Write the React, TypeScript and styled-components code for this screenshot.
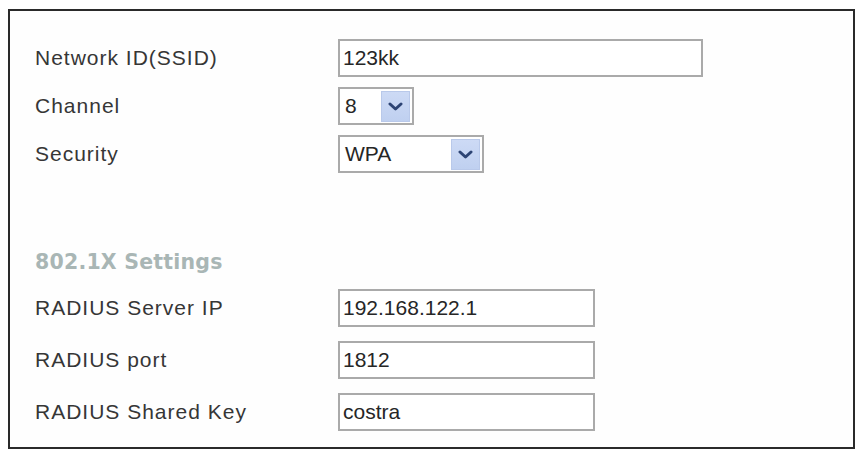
import React from "react";
import styled, { createGlobalStyle } from "styled-components";

const GlobalStyle = createGlobalStyle`
  body {
    margin: 9px 4px 0 8px;
    background: #ffffff;
    font-family: "Liberation Sans", Arial, sans-serif;
  }
`;

const Panel = styled.div`
  box-sizing: border-box;
  width: 847px;
  height: 440px;
  border: 2px solid #2a2a2a;
  padding: 28px 0 0 25px;
  background: #fefefe;
`;

const Section = styled.div<{ $gap: number }>`
  display: flex;
  flex-direction: column;
  gap: ${(p) => p.$gap}px;
`;

const Row = styled.div`
  display: grid;
  grid-template-columns: 303px auto;
  align-items: center;
  height: 38px;
`;

const Label = styled.span`
  font-size: 21px;
  letter-spacing: 1px;
  color: #363636;
`;

const Heading = styled.h3`
  margin: 77px 0 15px;
  height: 24px;
  line-height: 24px;
  font-family: "DejaVu Sans", Verdana, sans-serif;
  font-size: 20.5px;
  letter-spacing: 0.2px;
  font-weight: bold;
  color: #a9b6b5;
`;

const TextBox = styled.div<{ $width: number }>`
  box-sizing: border-box;
  width: ${(p) => p.$width}px;
  height: 38px;
  border: 2px solid #aaaaaa;
  padding-left: 3px;
  display: flex;
  align-items: center;
  font-size: 21px;
  color: #262626;
  background: #fff;
`;

const SelectBox = styled(TextBox)`
  justify-content: space-between;
  padding: 2px 2px 2px 5px;
`;

const ArrowButton = styled.span`
  box-sizing: border-box;
  width: 29px;
  height: 31px;
  background: linear-gradient(#cddaf5, #bfd0f0);
  border: 1px solid #b9c9ea;
  display: flex;
  align-items: center;
  justify-content: center;
`;

const Chevron = () => (
  <svg width="15" height="9" viewBox="0 0 15 9">
    <path d="M2 2 L7.5 7 L13 2" fill="none" stroke="#2d4474" strokeWidth="3" strokeLinejoin="round" strokeLinecap="round" />
  </svg>
);

const Select = ({ value, width }: { value: string; width: number }) => (
  <SelectBox $width={width}>
    <span>{value}</span>
    <ArrowButton>
      <Chevron />
    </ArrowButton>
  </SelectBox>
);

const App: React.FC = () => (
  <>
    <GlobalStyle />
    <Panel>
      <Section $gap={10}>
        <Row>
          <Label>Network ID(SSID)</Label>
          <TextBox $width={365}>123kk</TextBox>
        </Row>
        <Row>
          <Label>Channel</Label>
          <Select value="8" width={76} />
        </Row>
        <Row>
          <Label>Security</Label>
          <Select value="WPA" width={146} />
        </Row>
      </Section>
      <Heading>802.1X Settings</Heading>
      <Section $gap={14}>
        <Row>
          <Label>RADIUS Server IP</Label>
          <TextBox $width={257}>192.168.122.1</TextBox>
        </Row>
        <Row>
          <Label>RADIUS port</Label>
          <TextBox $width={257}>1812</TextBox>
        </Row>
        <Row>
          <Label>RADIUS Shared Key</Label>
          <TextBox $width={257}>costra</TextBox>
        </Row>
      </Section>
    </Panel>
  </>
);

export default App;
